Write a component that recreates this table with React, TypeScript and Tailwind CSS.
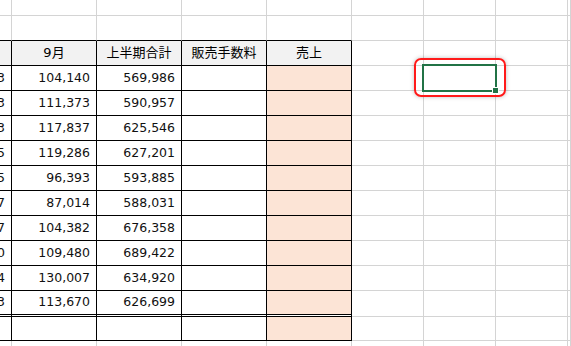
import React from "react";

const GRAY = "border-[#d4d4d4]";

const data: [string, string, string][] = [
  ["98,453", "104,140", "569,986"],
  ["97,213", "111,373", "590,957"],
  ["96,883", "117,837", "625,546"],
  ["98,105", "119,286", "627,201"],
  ["99,425", "96,393", "593,885"],
  ["97,457", "87,014", "588,031"],
  ["98,547", "104,382", "676,358"],
  ["99,120", "109,480", "689,422"],
  ["96,214", "130,007", "634,920"],
  ["97,033", "113,670", "626,699"],
];

const font = { fontFamily: '"DejaVu Sans", "Noto Sans CJK JP", sans-serif' };

function Cell({
  right,
  bottom,
  double,
  bg,
  align,
  children,
}: {
  right: boolean;
  bottom: boolean;
  double?: boolean;
  bg?: string;
  align?: "center" | "right";
  children?: React.ReactNode;
}) {
  const rb = right ? "border-r border-r-black" : "border-r border-r-[#d4d4d4]";
  const bb = double
    ? "border-b-[3px] border-double border-b-black bg-clip-padding"
    : bottom
    ? "border-b border-b-black"
    : "border-b border-b-[#d4d4d4]";
  const al =
    align === "center"
      ? "justify-center"
      : align === "right"
      ? "justify-end pr-[6px]"
      : "";
  return (
    <div
      className={`flex items-center overflow-hidden whitespace-nowrap text-[12.5px] text-[#111] ${rb} ${bb} ${al} ${bg ?? "bg-white"}`}
    >
      {children}
    </div>
  );
}

export default function App() {
  const rows: React.ReactNode[] = [];
  // row 0 and row 1 (above table)
  for (let r = 0; r < 2; r++) {
    for (let c = 0; c < 9; c++) {
      rows.push(
        <Cell key={`a${r}-${c}`} right={false} bottom={r === 1 && c <= 4} />
      );
    }
  }
  // header
  const headers = ["", "9月", "上半期合計", "販売手数料", "売上"];
  for (let c = 0; c < 9; c++) {
    const inT = c <= 4;
    rows.push(
      <Cell
        key={`h-${c}`}
        right={inT}
        bottom={inT}
        bg={inT ? "bg-[#f2f2f2]" : undefined}
        align="center"
      >
        {inT ? <span className="text-[13px] text-black">{headers[c]}</span> : null}
      </Cell>
    );
  }
  data.forEach((d, i) => {
    const last = i === data.length - 1;
    for (let c = 0; c < 9; c++) {
      const inT = c <= 4;
      rows.push(
        <Cell
          key={`d${i}-${c}`}
          right={inT}
          bottom={inT}
          double={inT && last}
          bg={c === 4 ? "bg-[#fce4d6]" : undefined}
          align={c <= 2 ? "right" : undefined}
        >
          {c <= 2 ? <span>{d[c]}</span> : null}
        </Cell>
      );
    }
  });
  // total row
  for (let c = 0; c < 9; c++) {
    const inT = c <= 4;
    rows.push(
      <Cell
        key={`t-${c}`}
        right={inT}
        bottom={inT}
        bg={c === 4 ? "bg-[#fce4d6]" : undefined}
      />
    );
  }
  // extra row
  for (let c = 0; c < 9; c++) {
    rows.push(<Cell key={`e-${c}`} right={false} bottom={false} />);
  }

  return (
    <div className="relative h-[346px] w-[571px] overflow-hidden bg-white" style={font}>
      <div className="grid grid-cols-[12px_85px_85px_85px_85px_72px_72px_72px_1fr] grid-rows-[16px_25px_25px_25px_25px_25px_25px_25px_25px_25px_25px_25px_26px_24px_25px]">
        {rows}
      </div>
      {/* red annotation */}
      <div className="absolute left-[414px] top-[58px] h-[39px] w-[92px] rounded-[7px] border-2 border-[#ff1a1a] shadow-[0_0_4px_rgba(0,0,0,0.25)]" />
      {/* selection */}
      <div className={`absolute left-[422px] top-[64px] h-[28px] w-[75px] border-2 border-[#217346] ${GRAY.replace("border", "")}`} />
      <div className="absolute left-[492px] top-[87px] h-[7px] w-[7px] border border-white bg-[#217346]" />
    </div>
  );
}
